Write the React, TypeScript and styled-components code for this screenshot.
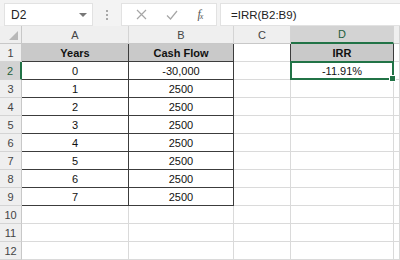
import React from 'react';
import styled, { createGlobalStyle } from 'styled-components';

const Global = createGlobalStyle`
  body {
    margin: 0;
    background: #ffffff;
    font-family: "Liberation Sans", Arial, sans-serif;
  }
`

const Page = styled.div`
  width: 400px;
  height: 260px;
  overflow: hidden;
  display: flex;
  flex-direction: column;
`

const Toolbar = styled.div`
  height: 34px;
  box-sizing: border-box;
  background: #f3f3f3;
  display: flex;
  align-items: flex-start;
  padding: 3px 0 0 4px;
`

const NameBox = styled.div`
  width: 89px;
  height: 23px;
  box-sizing: border-box;
  background: #fff;
  border: 1px solid #e2e2e2;
  display: flex;
  align-items: center;
  justify-content: space-between;
  padding: 0 5px 0 6px;
  font-size: 12px;
  color: #222;
`

const Caret = styled.span`
  width: 0;
  height: 0;
  border-left: 4px solid transparent;
  border-right: 4px solid transparent;
  border-top: 4px solid #777;
`

const Grip = styled.div`
  width: 28px;
  height: 23px;
  display: flex;
  flex-direction: column;
  align-items: center;
  justify-content: center;
  gap: 2px;
  span {
    width: 2px;
    height: 2px;
    background: #a8a8a8;
  }
`

const FxBox = styled.div`
  width: 96px;
  height: 23px;
  box-sizing: border-box;
  background: #fff;
  border: 1px solid #e2e2e2;
  display: flex;
  align-items: center;
  justify-content: space-around;
  padding: 0 4px;
  margin-right: 3px;
`

const Fx = styled.span`
  font-family: "Liberation Serif", "DejaVu Serif", serif;
  font-style: italic;
  font-size: 12px;
  color: #555;
  letter-spacing: -1px;
  sub {
    font-size: 8px;
    vertical-align: -1px;
  }
`

const FormulaBox = styled.div`
  flex: 1;
  height: 23px;
  box-sizing: border-box;
  background: #fff;
  border: 1px solid #e2e2e2;
  border-right: none;
  display: flex;
  align-items: center;
  padding-left: 10px;
  font-size: 11.5px;
  color: #222;
`

const Sheet = styled.table`
  width: 400px;
  table-layout: fixed;
  border-collapse: separate;
  border-spacing: 0;
  font-size: 11px;
  color: #111;
`

const ColHead = styled.th<{ $active?: boolean }>`
  height: 18px;
  box-sizing: border-box;
  padding: 0;
  font-weight: normal;
  text-align: center;
  color: ${p => (p.$active ? '#1e5e3a' : '#444')};
  background: ${p => (p.$active ? '#d3d3d3' : '#efefef')};
  border-right: 1px solid #d4d4d4;
  border-bottom: ${p => (p.$active ? '2px solid #217346' : '1px solid #c8c8c8')};
`

const Corner = styled.th`
  height: 18px;
  box-sizing: border-box;
  padding: 0;
  background: #efefef;
  border-right: 1px solid #c8c8c8;
  border-bottom: 1px solid #c8c8c8;
  position: relative;
  &::after {
    content: '';
    position: absolute;
    right: 3px;
    bottom: 3px;
    width: 0;
    height: 0;
    border-left: 9px solid transparent;
    border-bottom: 9px solid #b8b8b8;
  }
`

const RowHead = styled.th<{ $active?: boolean }>`
  height: 18px;
  box-sizing: border-box;
  padding: 0;
  font-weight: normal;
  text-align: center;
  color: ${p => (p.$active ? '#1e5e3a' : '#444')};
  background: ${p => (p.$active ? '#d3d3d3' : '#efefef')};
  border-right: ${p => (p.$active ? '2px solid #217346' : '1px solid #c8c8c8')};
  border-bottom: 1px solid #d4d4d4;
`

const Cell = styled.td<{ $right: string; $bottom: string; $fill?: boolean; $bold?: boolean; $sel?: boolean }>`
  height: 18px;
  box-sizing: border-box;
  padding: 0 2px;
  white-space: nowrap;
  overflow: ${p => (p.$sel ? 'visible' : 'hidden')};
  text-align: center;
  font-weight: ${p => (p.$bold ? 'bold' : 'normal')};
  background: ${p => (p.$fill ? '#c9c9c9' : '#fff')};
  border-right: 1px solid ${p => p.$right};
  border-bottom: 1px solid ${p => p.$bottom};
  position: ${p => (p.$sel ? 'relative' : 'static')};
  ${p =>
    p.$sel &&
    `
    &::before {
      content: '';
      position: absolute;
      left: -1px;
      top: -1px;
      right: -1px;
      bottom: -1px;
      border: 2px solid #217346;
    }
    &::after {
      content: '';
      position: absolute;
      right: -3px;
      bottom: -3px;
      width: 5px;
      height: 5px;
      background: #217346;
      border: 1px solid #fff;
    }
  `}
`

const GRID = '#dadada'
const DARK = '#3c3c3c'

const columns = ['A', 'B', 'C', 'D', 'E']
const widths = [22, 107, 105, 57, 103, 6]

const values: Record<number, string[]> = {
  1: ['Years', 'Cash Flow', '', 'IRR', ''],
  2: ['0', '-30,000', '', '-11.91%', ''],
  3: ['1', '2500', '', '', ''],
  4: ['2', '2500', '', '', ''],
  5: ['3', '2500', '', '', ''],
  6: ['4', '2500', '', '', ''],
  7: ['5', '2500', '', '', ''],
  8: ['6', '2500', '', '', ''],
  9: ['7', '2500', '', '', ''],
}

// dark table border on A1:B9 and D1:D2
function inBox(r: number, c: number) {
  if (c <= 1 && r >= 1 && r <= 9) return true
  if (c === 3 && r >= 1 && r <= 2) return true
  return false
}

function App() {
  const rows = Array.from({ length: 12 }, (_, i) => i + 1)
  return (
    <Page>
      <Global />
      <Toolbar>
        <NameBox>
          D2
          <Caret />
        </NameBox>
        <Grip>
          <span />
          <span />
          <span />
        </Grip>
        <FxBox>
          <svg width="11" height="11" viewBox="0 0 11 11">
            <path d="M1 1 L10 10 M10 1 L1 10" stroke="#a6a6a6" strokeWidth="1.2" fill="none" />
          </svg>
          <svg width="12" height="10" viewBox="0 0 12 10">
            <path d="M1 5.5 L4.5 9 L11 1" stroke="#a6a6a6" strokeWidth="1.2" fill="none" />
          </svg>
          <Fx>
            f<sub>x</sub>
          </Fx>
        </FxBox>
        <FormulaBox>=IRR(B2:B9)</FormulaBox>
      </Toolbar>
      <Sheet>
        <colgroup>
          {widths.map((w, i) => (
            <col key={i} style={{ width: w }} />
          ))}
        </colgroup>
        <thead>
          <tr>
            <Corner />
            {columns.map(c => (
              <ColHead key={c} $active={c === 'D'}>
                {c === 'E' ? '' : c}
              </ColHead>
            ))}
          </tr>
        </thead>
        <tbody>
          {rows.map(r => (
            <tr key={r}>
              <RowHead $active={r === 2}>{r}</RowHead>
              {columns.map((_, c) => {
                const v = values[r]?.[c] ?? ''
                const right = inBox(r, c) || inBox(r, c + 1) ? DARK : GRID
                const bottom = inBox(r, c) || inBox(r + 1, c) ? DARK : GRID
                return (
                  <Cell
                    key={c}
                    $right={right}
                    $bottom={bottom}
                    $fill={r === 1 && inBox(r, c)}
                    $bold={r === 1}
                    $sel={r === 2 && c === 3}
                  >
                    {v}
                  </Cell>
                )
              })}
            </tr>
          ))}
        </tbody>
      </Sheet>
    </Page>
  )
}

export default App
